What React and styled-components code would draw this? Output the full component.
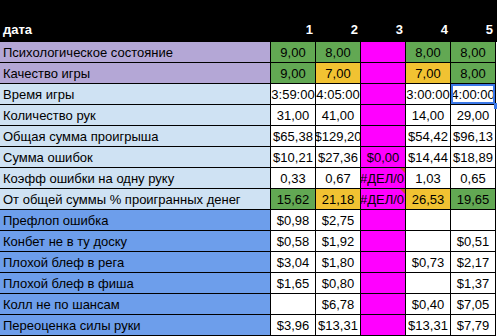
import React from "react";
import styled, { createGlobalStyle } from "styled-components";

const GlobalStyle = createGlobalStyle`
  html, body {
    margin: 0;
    padding: 0;
    background: #ffffff;
  }
  body {
    font-family: "Liberation Sans", Arial, sans-serif;
    font-size: 13px;
    color: #000;
  }
`;

const COLORS = {
  black: "#000000",
  white: "#ffffff",
  purple: "#b4a7d6",
  light: "#cfe2f3",
  blue: "#6d9eeb",
  green: "#62a853",
  yellow: "#f1c232",
  magenta: "#ff00ff",
};

const Sheet = styled.div`
  display: grid;
  grid-template-columns: 271px repeat(5, 45px) 1fr;
  grid-template-rows: 42px;
  grid-auto-rows: 21px;
  width: 497px;
  height: 336px;
  overflow: hidden;
`;

const HeaderCell = styled.div`
  box-sizing: border-box;
  background: ${COLORS.black};
  color: ${COLORS.white};
  font-weight: bold;
  display: flex;
  align-items: flex-end;
  justify-content: ${({ $right }) => ($right ? "flex-end" : "flex-start")};
  padding: 0 3px 5px 3px;
  line-height: 15px;
  white-space: nowrap;
  overflow: hidden;
`;

const HeaderRow = styled.div`
  display: contents;
`;

const Label = styled.div`
  box-sizing: border-box;
  background: ${({ $bg }) => $bg};
  border-right: 1px solid #000;
  border-bottom: 1px solid #000;
  padding: 0 3px;
  line-height: 22px;
  white-space: nowrap;
  overflow: hidden;
`;

const Cell = styled.div`
  position: relative;
  box-sizing: border-box;
  height: 21px;
  background: ${({ $bg }) => $bg || COLORS.white};
  border-right: 1px solid #000;
  border-bottom: 1px solid #000;
  display: flex;
  justify-content: ${({ $align }) => $align || "center"};
  line-height: 22px;
  white-space: nowrap;
  overflow: hidden;
`;

const ErrorText = styled.span`
  margin-left: -1px;
`;

const Filler = styled.div`
  background: ${COLORS.white};
`;

const ErrorMark = styled.span`
  position: absolute;
  top: 0;
  right: 0;
  width: 0;
  height: 0;
  border-top: 5px solid #c8502e;
  border-left: 5px solid transparent;
`;

const Selection = styled.span`
  position: absolute;
  inset: 0 1px 1px 0;
  border: 2px solid #3b78e7;
  pointer-events: none;
`;

const Handle = styled.span`
  position: absolute;
  right: -4px;
  bottom: -4px;
  width: 6px;
  height: 6px;
  background: #3b78e7;
  z-index: 3;
`;

const SelectedWrap = styled.div`
  position: relative;
  overflow: visible;
  z-index: 2;
`;

const Row = styled.div`
  display: contents;
`;

// each value: [text, bg, flag]; bg is a key of COLORS
const rows = [
  {
    label: "Психологическое состояние",
    bg: COLORS.purple,
    cells: [["9,00", "green"], ["8,00", "green"], ["", "magenta"], ["8,00", "green"], ["8,00", "green"]],
  },
  {
    label: "Качество игры",
    bg: COLORS.purple,
    cells: [["9,00", "green"], ["7,00", "yellow"], ["", "magenta"], ["7,00", "yellow"], ["8,00", "green"]],
  },
  {
    label: "Время игры",
    bg: COLORS.light,
    cells: [["3:59:00"], ["4:05:00"], ["", "magenta"], ["3:00:00"], ["4:00:00", null, "selected"]],
  },
  {
    label: "Количество рук",
    bg: COLORS.light,
    cells: [["31,00"], ["41,00"], ["", "magenta"], ["14,00"], ["29,00"]],
  },
  {
    label: "Общая сумма проигрыша",
    bg: COLORS.light,
    cells: [["$65,38"], ["$129,20"], ["", "magenta"], ["$54,42"], ["$96,13"]],
  },
  {
    label: "Сумма ошибок",
    bg: COLORS.light,
    cells: [["$10,21"], ["$27,36"], ["$0,00", "magenta"], ["$14,44"], ["$18,89"]],
  },
  {
    label: "Коэфф ошибки на одну руку",
    bg: COLORS.light,
    cells: [["0,33"], ["0,67"], ["#ДЕЛ/0!", "magenta", "error"], ["1,03"], ["0,65"]],
  },
  {
    label: "От общей суммы % проигранных денег",
    bg: COLORS.light,
    cells: [["15,62", "green"], ["21,18", "yellow"], ["#ДЕЛ/0!", "magenta", "error"], ["26,53", "yellow"], ["19,65", "green"]],
  },
  {
    label: "Префлоп ошибка",
    bg: COLORS.blue,
    cells: [["$0,98"], ["$2,75"], ["", "magenta"], [""], [""]],
  },
  {
    label: "Конбет не в ту доску",
    bg: COLORS.blue,
    cells: [["$0,58"], ["$1,92"], ["", "magenta"], [""], ["$0,51"]],
  },
  {
    label: "Плохой блеф в рега",
    bg: COLORS.blue,
    cells: [["$3,04"], ["$1,80"], ["", "magenta"], ["$0,73"], ["$2,17"]],
  },
  {
    label: "Плохой блеф в фиша",
    bg: COLORS.blue,
    cells: [["$1,65"], ["$0,80"], ["", "magenta"], [""], ["$1,37"]],
  },
  {
    label: "Колл не по шансам",
    bg: COLORS.blue,
    cells: [[""], ["$6,78"], ["", "magenta"], ["$0,40"], ["$7,05"]],
  },
  {
    label: "Переоценка силы руки",
    bg: COLORS.blue,
    cells: [["$3,96"], ["$13,31"], ["", "magenta"], ["$13,31"], ["$7,79"]],
  },
];

function DataCell({ value }) {
  const [text, bg, flag] = value;
  if (flag === "selected") {
    return (
      <SelectedWrap>
        <Cell $bg={bg ? COLORS[bg] : undefined}>{text}</Cell>
        <Selection />
        <Handle />
      </SelectedWrap>
    );
  }
  if (flag === "error") {
    return (
      <Cell $bg={COLORS[bg]} $align="flex-start">
        <ErrorText>{text}</ErrorText>
        <ErrorMark />
      </Cell>
    );
  }
  return <Cell $bg={bg ? COLORS[bg] : undefined}>{text}</Cell>;
}

export default function App() {
  return (
    <>
      <GlobalStyle />
      <Sheet>
        <HeaderRow>
          <HeaderCell>дата</HeaderCell>
          {[1, 2, 3, 4, 5].map((n) => (
            <HeaderCell key={n} $right>
              {n}
            </HeaderCell>
          ))}
          <HeaderCell />
        </HeaderRow>
        {rows.map((row) => (
          <Row key={row.label}>
            <Label $bg={row.bg}>{row.label}</Label>
            {row.cells.map((c, i) => (
              <DataCell key={i} value={c} />
            ))}
            <Filler />
          </Row>
        ))}
      </Sheet>
    </>
  );
}
